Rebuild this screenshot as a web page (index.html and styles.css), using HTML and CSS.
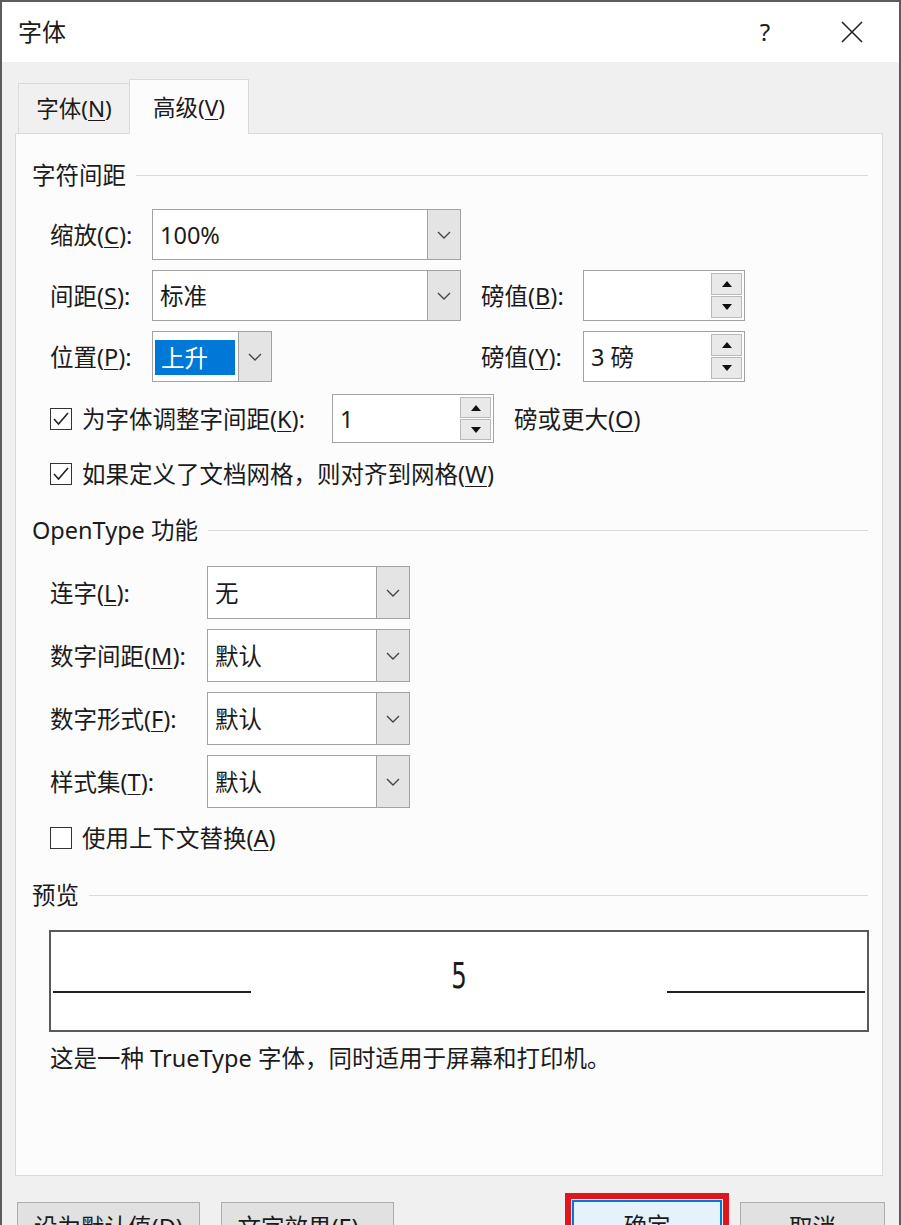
FILE: index.html
```html
<!DOCTYPE html>
<html lang="zh-CN">
<head>
  <meta charset="UTF-8" />
  <title>字体</title>
  <link rel="stylesheet" href="styles.css">
</head>
<body>
  <div class="window">
    <div class="titlebar">
      <span class="title">字体</span>
      <span class="help">?</span>
      <span class="close">
        <svg width="22" height="22" viewBox="0 0 22 22"><path d="M1 1 L21 21 M21 1 L1 21" stroke="#222" stroke-width="1.6" fill="none"/></svg>
      </span>
    </div>

    <div class="client">
      <div class="tabs">
        <div class="tab">字体(<u>N</u>)</div>
        <div class="tab active">高级(<u>V</u>)</div>
      </div>

      <div class="panel">
        <div class="sec first">字符间距</div>

        <div class="grid-spacing">
          <label class="f-label">缩放(<u>C</u>):</label>
          <div class="combo"><span class="combo-text">100%</span><span class="drop"></span></div>

          <label class="f-label">间距(<u>S</u>):</label>
          <div class="combo"><span class="combo-text">标准</span><span class="drop"></span></div>
          <label class="pt-label">磅值(<u>B</u>):</label>
          <div class="spin"><span class="spin-text"></span><span class="spin-btns"><span class="up"></span><span class="down"></span></span></div>

          <label class="f-label">位置(<u>P</u>):</label>
          <div class="combo narrow"><span class="combo-text"><span class="sel">上升</span></span><span class="drop"></span></div>
          <label class="pt-label">磅值(<u>Y</u>):</label>
          <div class="spin"><span class="spin-text">3 磅</span><span class="spin-btns"><span class="up"></span><span class="down"></span></span></div>
        </div>

        <div class="kern-row">
          <span class="check on"></span>
          <label class="kern-label">为字体调整字间距(<u>K</u>):</label>
          <div class="spin"><span class="spin-text">1</span><span class="spin-btns"><span class="up"></span><span class="down"></span></span></div>
          <span class="kern-after">磅或更大(<u>O</u>)</span>
        </div>

        <div class="check-row grid-snap">
          <span class="check on"></span>
          <label>如果定义了文档网格，则对齐到网格(<u>W</u>)</label>
        </div>

        <div class="sec open">OpenType 功能</div>

        <div class="grid-open">
          <label>连字(<u>L</u>):</label>
          <div class="combo"><span class="combo-text">无</span><span class="drop"></span></div>
          <label>数字间距(<u>M</u>):</label>
          <div class="combo"><span class="combo-text">默认</span><span class="drop"></span></div>
          <label>数字形式(<u>F</u>):</label>
          <div class="combo"><span class="combo-text">默认</span><span class="drop"></span></div>
          <label>样式集(<u>T</u>):</label>
          <div class="combo"><span class="combo-text">默认</span><span class="drop"></span></div>
        </div>

        <div class="check-row ctx">
          <span class="check"></span>
          <label>使用上下文替换(<u>A</u>)</label>
        </div>

        <div class="sec preview-head">预览</div>

        <div class="preview">
          <span class="rule"></span>
          <span class="sample">5</span>
          <span class="rule"></span>
        </div>

        <p class="note">这是一种 TrueType 字体，同时适用于屏幕和打印机。</p>
      </div>

      <div class="buttons">
        <button class="btn wide">设为默认值(<u>D</u>)</button>
        <button class="btn effects">文字效果(<u>E</u>)...</button>
        <button class="btn ok">确定</button>
        <button class="btn cancel">取消</button>
      </div>
    </div>
  </div>
</body>
</html>
```

FILE: styles.css
```css
:root {
  --texto: #1b1b1b;
  --borde: #a2a2a2;
  --linea: #dadada;
  --gris: #f0f0f0;
  --boton: #e4e4e4;
  --azul: #0078d7;
}
* { box-sizing: border-box; margin: 0; padding: 0; }
body {
  width: 901px;
  height: 1225px;
  overflow: hidden;
  font-family: "Noto Sans", "Noto Sans CJK SC", sans-serif;
  font-size: 23.5px;
  line-height: 32px;
  color: var(--texto);
  background: var(--gris);
}
u { text-underline-offset: 3px; text-decoration-thickness: 1px; }
label { display: block; white-space: nowrap; }

.window {
  height: 1225px;
  border: 2px solid #5c5c5c;
  border-bottom: none;
  background: var(--gris);
}
.titlebar {
  height: 60px;
  background: #fff;
  display: flex;
  align-items: center;
  padding-left: 16px;
}
.title { font-size: 24px; }
.help { margin-left: auto; width: 46px; text-align: center; font-size: 24px; }
.close {
  width: 46px;
  margin: 0 24px 0 41px;
  display: flex;
  justify-content: center;
}

.client { padding: 0 16px 0 13px; }
.tabs {
  height: 71px;
  display: flex;
  align-items: flex-end;
  padding-left: 3px;
}
.tab {
  height: 50px;
  width: 111px;
  border: 1px solid var(--linea);
  border-right: none;
  border-bottom: none;
  text-align: center;
  line-height: 50px;
  font-size: 22.5px;
}
.tab.active {
  height: 55px;
  width: 120px;
  background: #fcfcfc;
  border-right: 1px solid var(--linea);
  margin-bottom: -1px;
  position: relative;
  line-height: 56px;
}

.panel {
  height: 1043px;
  background: #fcfcfc;
  border: 1px solid var(--linea);
}
.sec {
  display: flex;
  align-items: center;
  gap: 10px;
  height: 32px;
  margin-left: 16px;
}
.sec::after {
  content: '';
  flex: 1;
  border-top: 1px solid var(--linea);
  margin-right: 14px;
}
.sec.first { margin-top: 25px; }
.sec.open { margin-top: 24px; }
.sec.preview-head { margin-top: 25px; }

/* controles */
.combo, .spin {
  display: flex;
  height: 100%;
  background: #fff;
  border: 1px solid var(--borde);
}
.combo-text, .spin-text {
  flex: 1;
  padding-left: 7px;
  display: flex;
  align-items: center;
  white-space: nowrap;
}
.drop {
  width: 33px;
  background: var(--boton) url("data:image/svg+xml,%3Csvg xmlns='http://www.w3.org/2000/svg' width='14' height='8'%3E%3Cpath d='M1 1 L7 7 L13 1' stroke='%23444' stroke-width='1.4' fill='none'/%3E%3C/svg%3E") no-repeat center;
  border-left: 1px solid var(--borde);
}
.combo.narrow { width: 120px; justify-self: start; }
.combo.narrow .combo-text { padding: 8px 3px 6px 2px; }
.sel {
  flex: 1;
  height: 100%;
  background: var(--azul);
  color: #fff;
  padding-left: 6px;
  display: flex;
  align-items: center;
}

.spin { width: 162px; }
.spin-btns {
  width: 33px;
  padding: 2px 2px 2px 0;
  display: flex;
  flex-direction: column;
  gap: 1px;
}
.spin-btns span {
  flex: 1;
  background: #e9e9e9 no-repeat center;
  border: 1px solid #b9b9b9;
}
.spin-btns .up {
  background-image: url("data:image/svg+xml,%3Csvg xmlns='http://www.w3.org/2000/svg' width='10' height='6'%3E%3Cpath d='M0 6 L5 0 L10 6 Z' fill='%23111'/%3E%3C/svg%3E");
}
.spin-btns .down {
  background-image: url("data:image/svg+xml,%3Csvg xmlns='http://www.w3.org/2000/svg' width='10' height='6'%3E%3Cpath d='M0 0 L5 6 L10 0 Z' fill='%23111'/%3E%3C/svg%3E");
}

.check {
  width: 22px;
  height: 22px;
  border: 1.5px solid #333;
  background: #fff no-repeat center;
  flex-shrink: 0;
}
.check.on {
  background-image: url("data:image/svg+xml,%3Csvg xmlns='http://www.w3.org/2000/svg' width='16' height='14'%3E%3Cpath d='M1 7 L5.5 12 L15 1' stroke='%23222' stroke-width='1.6' fill='none'/%3E%3C/svg%3E");
}

/* grupo: espaciado de caracteres */
.grid-spacing {
  display: grid;
  grid-template-columns: 102px 309px 20px 102px 162px;
  grid-auto-rows: 51px;
  row-gap: 10px;
  align-items: center;
  margin: 18px 0 0 34px;
}
.grid-spacing .combo, .grid-spacing .spin { height: 51px; }
.f-label { grid-column: 1; }
.pt-label { grid-column: 4; }

.kern-row {
  display: flex;
  align-items: center;
  height: 49px;
  margin: 12px 0 0 34px;
}
.kern-row .check { margin-right: 10px; }
.kern-label { width: 250px; }
.kern-after { margin-left: 20px; }

.check-row {
  display: flex;
  align-items: center;
  gap: 10px;
  height: 32px;
  margin-left: 34px;
}
.grid-snap { margin-top: 15px; }
.ctx { margin-top: 14px; }

/* grupo: OpenType */
.grid-open {
  display: grid;
  grid-template-columns: 157px 203px;
  grid-auto-rows: 53px;
  row-gap: 10px;
  align-items: center;
  margin: 20px 0 0 34px;
}

/* vista previa */
.preview {
  display: flex;
  align-items: flex-start;
  width: 820px;
  height: 102px;
  margin: 19px 0 0 33px;
  background: #fff;
  border: 2px solid #5a5a5a;
}
.rule {
  width: 198px;
  margin: 59px 2px 0;
  border-top: 2px solid #222;
}
.sample {
  flex: 1;
  text-align: center;
  margin-top: 24px;
  font-size: 35px;
  line-height: 40px;
  font-family: "DejaVu Sans", sans-serif;
  transform: scaleX(0.7);
}
.note { margin: 10px 0 0 34px; height: 32px; }

/* botones */
.buttons {
  display: flex;
  align-items: flex-start;
  margin: 26px -2px 0 2px;
}
.btn {
  height: 50px;
  font: inherit;
  color: var(--texto);
  background: #e1e1e1;
  border: 1px solid #adadad;
}
.btn.wide { width: 183px; }
.btn.effects { width: 173px; margin-left: 21px; }
.btn.ok {
  width: 150px;
  margin: -2px 18px 0 auto;
  height: 52px;
  background: #e5f1fb;
  border: 2px solid var(--azul);
  outline: 6px solid #e3141b;
  outline-offset: 1px;
}
.btn.cancel { width: 145px; }
```
